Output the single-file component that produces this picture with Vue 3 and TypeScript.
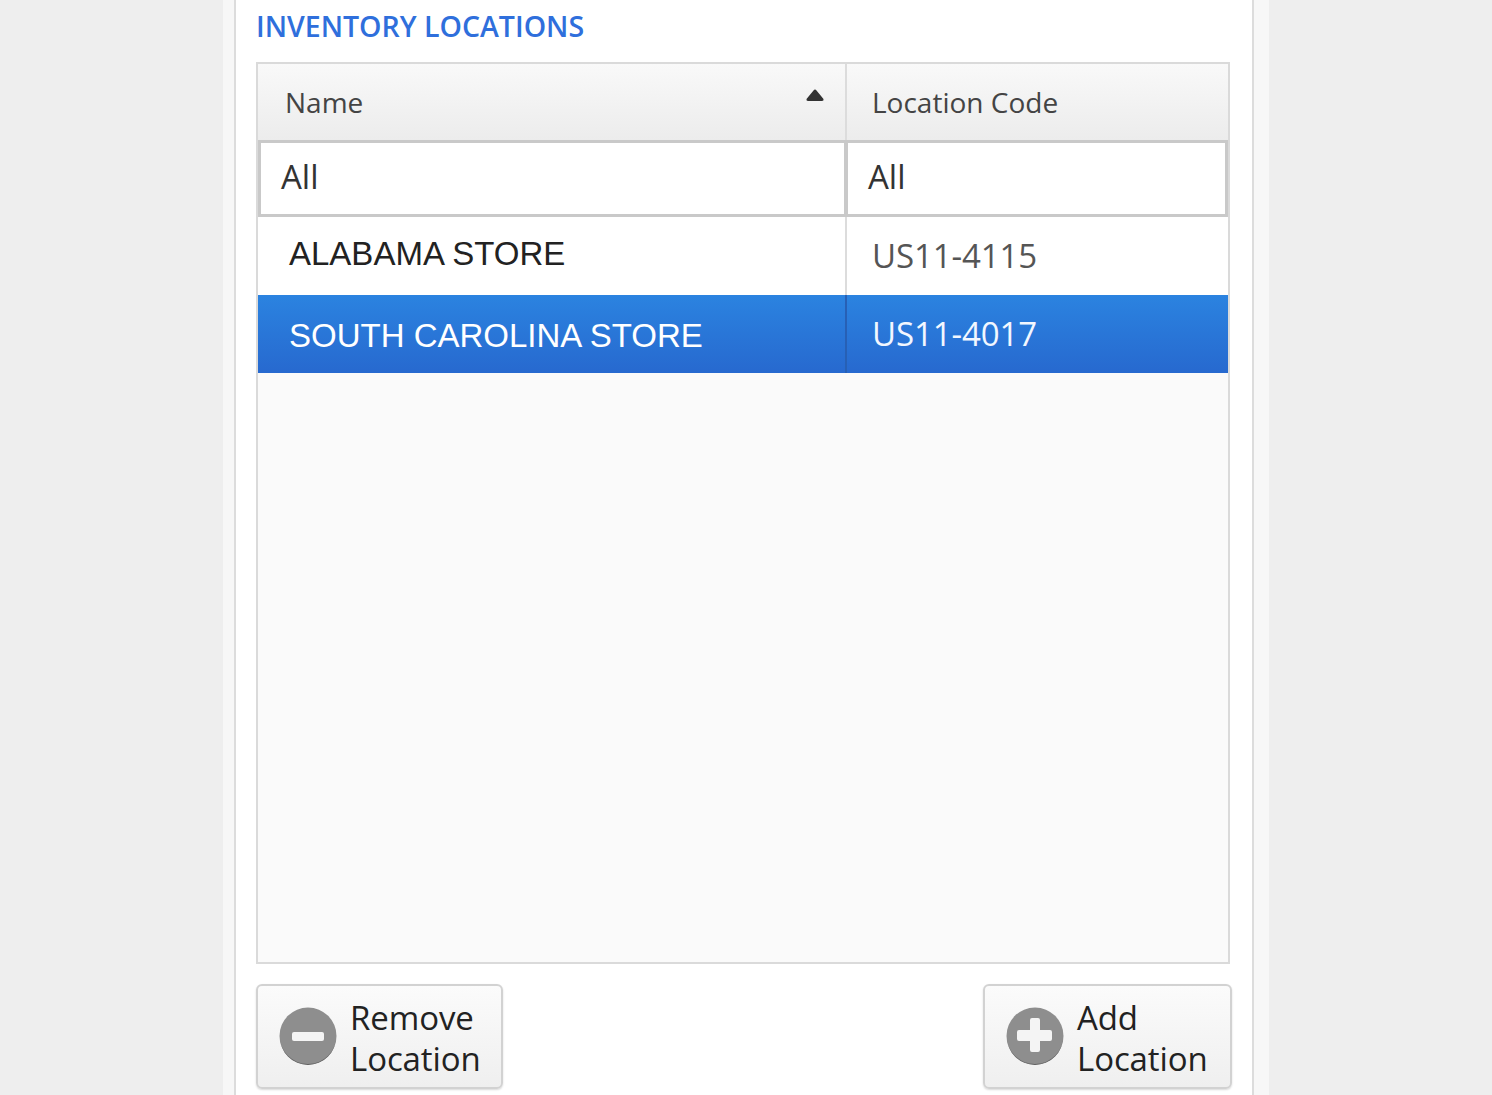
<script setup lang="ts">
interface Row { name: string; code: string; selected: boolean }
const rows: Row[] = [
  { name: 'ALABAMA STORE', code: 'US11-4115', selected: false },
  { name: 'SOUTH CAROLINA STORE', code: 'US11-4017', selected: true },
]
</script>

<template>
  <div class="page">
    <div class="halo">
      <section class="panel">
        <h2 class="title">INVENTORY LOCATIONS</h2>
        <div class="table">
          <div class="grid head">
            <div class="hcell first">
              <span>Name</span>
              <svg class="sort" width="18" height="12" viewBox="0 0 18 12"><path d="M9 0.5 Q9.8 0.5 10.5 1.5 L17.5 10 Q18 12 16 12 L2 12 Q0 12 0.5 10 L7.5 1.5 Q8.2 0.5 9 0.5 Z" fill="#333" /></svg>
            </div>
            <div class="hcell second"><span>Location Code</span></div>
          </div>
          <div class="grid filter">
            <div class="fcell first">All</div>
            <div class="fcell second">All</div>
          </div>
          <div v-for="r in rows" :key="r.code" class="grid row" :class="{ selected: r.selected }">
            <div class="cell name">{{ r.name }}</div>
            <div class="cell code">{{ r.code }}</div>
          </div>
          <div class="empty"></div>
        </div>
        <div class="actions">
          <button class="btn remove" type="button">
            <svg class="ico" width="58" height="58" viewBox="0 0 58 58">
              <circle cx="29" cy="29" r="28.5" fill="#8e8e8e" />
              <path d="M1 30 A28 28 0 0 0 57 30 A28 27 0 0 1 1 30 Z" fill="#5f5f5f" />
              <rect x="13" y="25" width="32" height="9" rx="2" fill="#f4f4f4" />
            </svg>
            <span class="lbl">Remove<br />Location</span>
          </button>
          <button class="btn add" type="button">
            <svg class="ico" width="58" height="58" viewBox="0 0 58 58">
              <circle cx="29" cy="29" r="28.5" fill="#8e8e8e" />
              <path d="M1 30 A28 28 0 0 0 57 30 A28 27 0 0 1 1 30 Z" fill="#5f5f5f" />
              <path d="M24 13 a2 2 0 0 1 2 -2 h6 a2 2 0 0 1 2 2 v10 h10 a2 2 0 0 1 2 2 v7 a2 2 0 0 1 -2 2 h-10 v9 a2 2 0 0 1 -2 2 h-6 a2 2 0 0 1 -2 -2 v-9 h-11 a2 2 0 0 1 -2 -2 v-7 a2 2 0 0 1 2 -2 h11 Z" fill="#f4f4f4" />
            </svg>
            <span class="lbl">Add<br />Location</span>
          </button>
        </div>
      </section>
    </div>
  </div>
</template>

<style>
html, body { margin: 0; background: #eeeeee; }
</style>

<style scoped>
.page {
  width: 1492px;
  height: 1095px;
  overflow: hidden;
  background: #eeeeee;
  font-family: "Open Sans", sans-serif;
  box-sizing: border-box;
  padding-left: 223px;
}
.halo {
  width: 1046px;
  height: 1095px;
  box-sizing: border-box;
  padding: 0 15px 0 11px;
  background: #f7f7f7;
}
.panel {
  width: 1020px;
  height: 1095px;
  box-sizing: border-box;
  background: #fff;
  border-left: 2px solid #dcdcdc;
  border-right: 2px solid #dcdcdc;
  padding: 0 22px 0 20px;
}
.title {
  margin: 0;
  height: 62px;
  padding-top: 7px;
  box-sizing: border-box;
  font-size: 28.5px;
  line-height: 38px;
  font-weight: 600;
  color: #2f6fdc;
  letter-spacing: 0;
}
.table {
  width: 974px;
  height: 902px;
  box-sizing: border-box;
  border: 2px solid #dadada;
  background: #fafafa;
  display: flex;
  flex-direction: column;
}
.grid {
  display: grid;
  grid-template-columns: 589px 381px;
}
.head { height: 76px; }
.hcell {
  background: linear-gradient(#f9f9f9, #ececec);
  font-size: 28px;
  color: #444;
  display: flex;
  align-items: center;
  justify-content: space-between;
  box-sizing: border-box;
  padding-bottom: 0;
}
.hcell.first { padding-left: 27px; padding-right: 21px; border-right: 2px solid #dcdcdc; position: relative; }
.hcell.second { padding-left: 25px; }
.sort { margin-bottom: 14px; }
.filter { height: 77px; grid-template-columns: 588px 382px; }
.fcell {
  background: #fff;
  box-sizing: border-box;
  border: 3px solid #c9c9c9;
  font-size: 33px;
  color: #333;
  line-height: 68px;
  padding-left: 20px;
}
.fcell.first { border-right-width: 2px; }
.fcell.second { border-left-width: 2px; padding-left: 20px; }
.row { height: 78px; background: #fff; }
.cell { display: flex; align-items: center; box-sizing: border-box; }
.name {
  font-family: "Liberation Sans", Arial, sans-serif;
  font-size: 33px;
  color: #222;
  padding-left: 31px;
  border-right: 2px solid #dcdcdc;
  padding-bottom: 4px;
}
.code {
  font-size: 33px;
  color: #555;
  padding-left: 25px;
  padding-bottom: 2px;
  letter-spacing: -0.1px;
}
.row.selected {
  background: linear-gradient(#2b83e0, #2769cf);
}
.row.selected .name { color: #fff; border-right-color: #2760b5; padding-bottom: 0; padding-top: 4px; }
.row.selected .code { color: #f2f7ff; padding-bottom: 1px; }
.empty { flex: 1; background: #fafafa; }
.actions {
  margin-top: 20px;
  width: 976px;
  display: flex;
  justify-content: space-between;
}
.btn {
  height: 105px;
  box-sizing: border-box;
  border: 2px solid #d2d2d2;
  border-radius: 6px;
  background: linear-gradient(#fbfbfb, #efefef);
  box-shadow: 0 1px 2px rgba(0, 0, 0, 0.15);
  display: flex;
  align-items: center;
  padding: 0;
  font-family: "Open Sans", sans-serif;
  font-size: 33px;
  line-height: 41px;
  color: #222;
  text-align: left;
}
.remove { width: 247px; padding-left: 21px; }
.add { width: 249px; padding-left: 21px; }
.ico { flex: none; margin-right: 13px; margin-bottom: 2px; }
.lbl { display: block; letter-spacing: -0.1px; padding-top: 2px; }
</style>
